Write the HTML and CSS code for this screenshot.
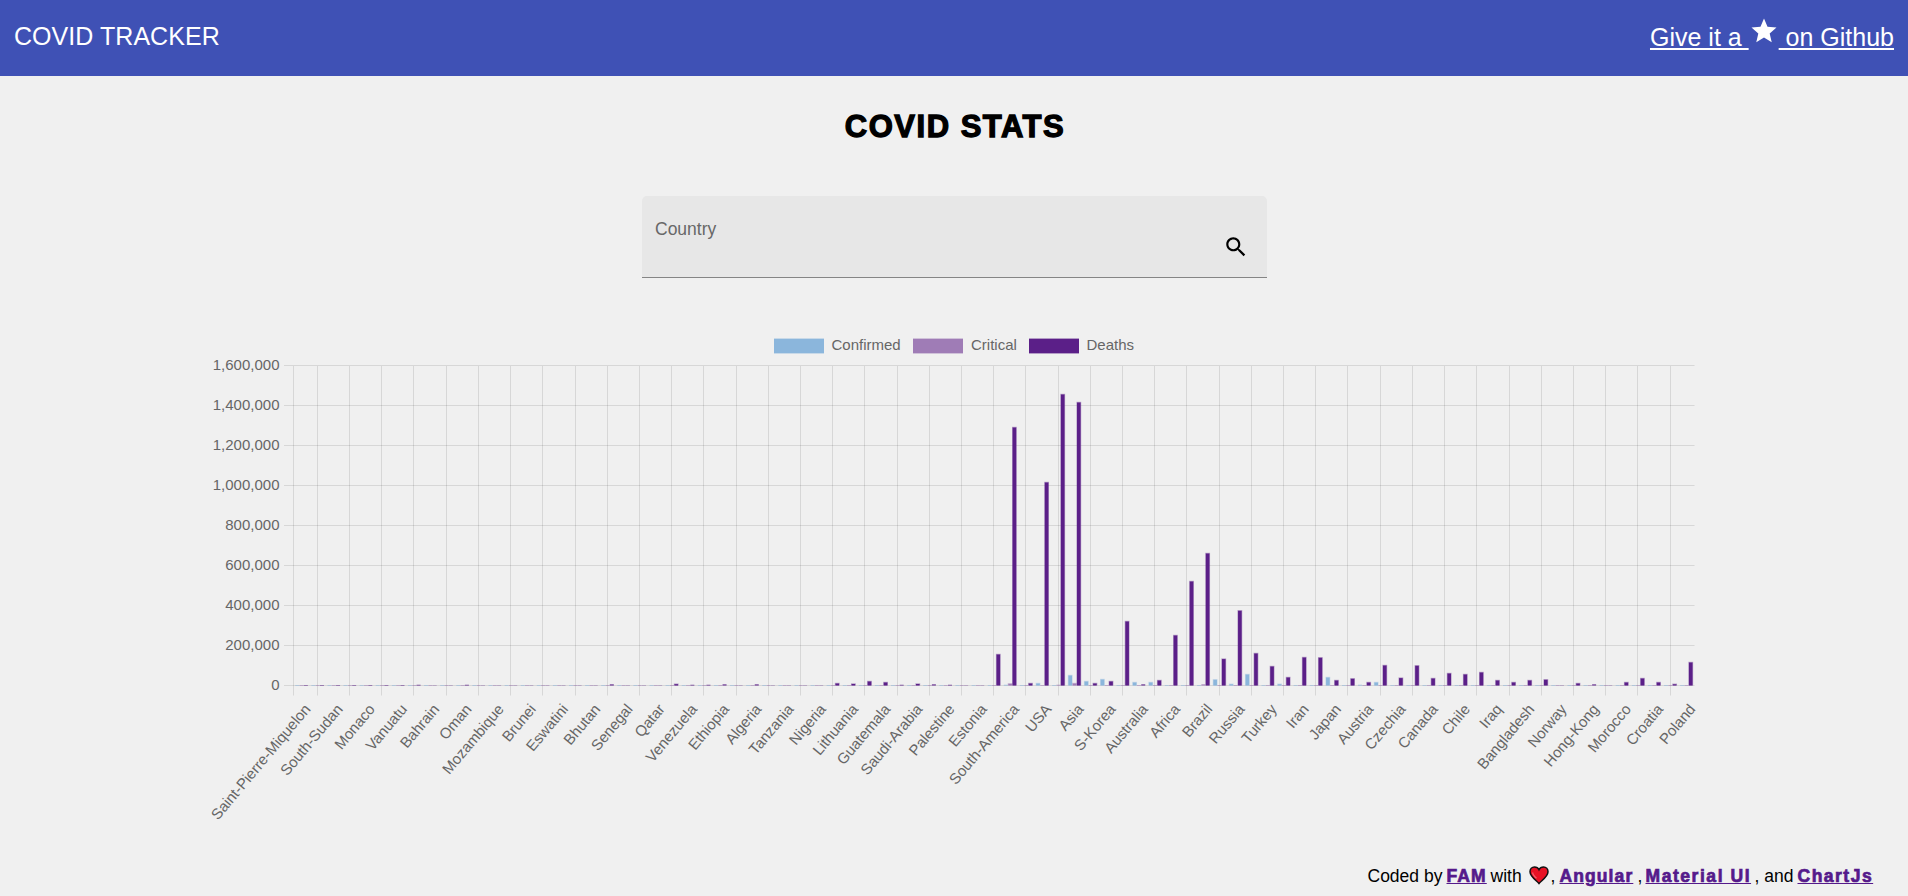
FILE: index.html
```html
<!DOCTYPE html>
<html lang="en">
<head>
<meta charset="utf-8">
<title>Covid Tracker</title>
<link rel="stylesheet" href="styles.css">
</head>
<body>
<header class="toolbar">
  <span class="brand">COVID TRACKER</span>
  <a class="github" href="#"><span class="u">Give it a&nbsp;</span><svg class="star" viewBox="0 0 24 24"><path d="M12 17.27 18.18 21l-1.64-7.03L22 9.24l-7.19-.61L12 2 9.19 8.63 2 9.24l5.46 4.73L5.82 21z"/></svg><span class="u">&nbsp;on Github</span></a>
</header>
<main class="main">
  <h1 class="title">COVID STATS</h1>
  <div class="field">
    <span class="label">Country</span>
    <svg class="search" viewBox="0 0 24 24"><path d="M15.5 14h-.79l-.28-.27C15.41 12.59 16 11.11 16 9.5 16 5.91 13.09 3 9.5 3S3 5.91 3 9.5 5.91 16 9.5 16c1.61 0 3.09-.59 4.23-1.57l.27.28v.79l5 4.99L20.49 19l-4.99-5zm-6 0C7.01 14 5 11.99 5 9.5S7.01 5 9.5 5 14 7.01 14 9.5 11.99 14 9.5 14z"/></svg>
  </div>
  <svg class="chart" id="chart" viewBox="200 328 1508 500"></svg>
</main>
<footer class="footer">
  <span class="by">Coded by</span>
  <a class="link fam" href="#">FAM</a>
  <span class="with">with</span>
  <svg class="heart" viewBox="0 0 20 19"><path d="M10 17.5C7.5 14.5 1 10.5 1 5.7 1 3 3 1 5.4 1 7.500 1 9.200 2.100 10 3.800 10.800 2.100 12.500 1 14.600 1 17 1 19 3 19 5.700 19 10.500 12.500 14.500 10 17.500z" fill="#e81224" stroke="#111" stroke-width="1.500"/><path d="M3.600 6.500C3.600 8.500 5.500 10.500 7.500 12.300" fill="none" stroke="#f4606c" stroke-width="1.300"/></svg>
  <span class="c1">,</span>
  <a class="link ang" href="#">Angular</a>
  <span class="c2">,</span>
  <a class="link mat" href="#">Material UI</a>
  <span class="and">, and</span>
  <a class="link cjs" href="#">ChartJs</a>
</footer>
<script src="chart.js"></script>
</body>
</html>
```
FILE: styles.css
```css
* { box-sizing: border-box; }
body {
  margin: 0;
  height: 896px;
  display: flex;
  flex-direction: column;
  overflow: hidden;
  background: #f0f0f0;
  color: #000;
  font-family: "Liberation Sans", Arial, sans-serif;
}
.toolbar {
  height: 76px;
  flex: none;
  display: flex;
  justify-content: space-between;
  padding: 0 14px;
  background: #3f51b5;
  color: #fff;
  font-size: 25px;
}
.brand { line-height: 72px; letter-spacing: 0.05px; }
.github {
  display: flex;
  color: #fff;
  line-height: 74px;
  text-decoration: none;
}
.u { text-decoration: underline; text-decoration-thickness: 2px; text-underline-offset: 2px; }
.star { width: 30px; height: 30px; margin-top: 16px; fill: #fff; }
.main { display: flex; flex-direction: column; align-items: center; }
.title {
  margin: 32px 0 0;
  height: 88px;
  line-height: 38px;
  padding-left: 2px;
  font-size: 31px;
  font-weight: 700;
  letter-spacing: 1.5px;
  -webkit-text-stroke: 1.3px #000;
}
.field {
  width: 625px;
  height: 82px;
  display: flex;
  justify-content: space-between;
  padding: 0 17.5px 0 13.5px;
  background: #e7e7e7;
  border-bottom: 1px solid #858585;
  border-radius: 5px 5px 0 0;
}
.label { font-size: 17.5px; line-height: 20px; margin-top: 23px; color: #686868; }
.search { width: 26px; height: 26px; margin-top: 38px; }
.chart { width: 1508px; height: 500px; margin-top: 50px; display: block; }
.chart text { font-size: 15px; fill: #666; }
.grid { stroke: rgba(0, 0, 0, 0.1); stroke-width: 1; }
.confirmed { fill: #8bb6dc; }
.critical { fill: #9f7cb6; }
.deaths { fill: #5b1f88; }
.faint { fill-opacity: 0.4; }
.footer {
  flex: none;
  display: flex;
  height: 24px;
  margin-top: 36px;
  padding-left: 1367.5px;
  line-height: 24px;
  font-size: 17.5px;
  white-space: nowrap;
}
.by { width: 79px; }
.with { width: 38px; }
.heart { width: 20px; height: 19px; margin-top: 2px; }
.c1 { width: 11px; padding-left: 2px; }
.c2 { width: 8px; }
.and { width: 43px; }
.link {
  color: #551a8b;
  font-weight: 700;
  -webkit-text-stroke: 0.7px #551a8b;
  text-decoration: underline;
}
.fam { width: 44px; letter-spacing: 1.1px; }
.ang { width: 78px; letter-spacing: 1.100px; }
.mat { width: 109px; letter-spacing: 1.55px; }
.cjs { letter-spacing: 1.5px; }
```
FILE: chart.js
```js
const svg = document.getElementById('chart');
const NS = 'http://www.w3.org/2000/svg';
const add = (tag, attrs, text) => {
  const el = document.createElementNS(NS, tag);
  for (const k in attrs) el.setAttribute(k, attrs[k]);
  if (text) el.textContent = text;
  svg.appendChild(el);
};
const left = 293.5, right = 1694.5, top0 = 365.5, base = 685.5, step = (right - left) / 87;
const line = (x1, y1, x2, y2) => add('line', { x1, y1, x2, y2, class: 'grid' });

// Legend
[['Confirmed', 774, 'confirmed', 831.5], ['Critical', 913, 'critical', 971], ['Deaths', 1029, 'deaths', 1086.5]].forEach(([name, x, cls, tx]) => {
  add('rect', { x, y: 338, width: 50, height: 16, class: cls + ' faint' });
  add('rect', { x, y: 339, width: 50, height: 14, class: cls });
  add('text', { x: tx, y: 350 }, name);
});

// Horizontal grid and value labels
for (let k = 0; k <= 8; k++) {
  const y = top0 + 40 * k;
  line(284, y, right, y);
  add('text', { x: 279.5, y: y + 4.8, 'text-anchor': 'end' }, ((8 - k) * 200000).toLocaleString('en-US'));
}

// Vertical grid
line(left, 366, left, 695.5);
for (let k = 0; k < 43; k++) {
  const x = Math.floor(left + step * (1.5 + 2 * k) - 0.3) + 0.5;
  line(x, 366, x, 695.5);
}

// Country labels
'Saint-Pierre-Miquelon,South-Sudan,Monaco,Vanuatu,Bahrain,Oman,Mozambique,Brunei,Eswatini,Bhutan,Senegal,Qatar,Venezuela,Ethiopia,Algeria,Tanzania,Nigeria,Lithuania,Guatemala,Saudi-Arabia,Palestine,Estonia,South-America,USA,Asia,S-Korea,Australia,Africa,Brazil,Russia,Turkey,Iran,Japan,Austria,Czechia,Canada,Chile,Iraq,Bangladesh,Norway,Hong-Kong,Morocco,Croatia,Poland'.split(',').forEach((name, k) => {
  const x = left + 17.8 + step * 2 * k;
  add('text', { transform: `translate(${x} 709.5) rotate(-50)`, 'text-anchor': 'end' }, name);
});

// Bar heights by country index
const confirmed = { 44: 1, 46: 2.3, 48: 10.3, 49: 4.3, 50: 6.3, 52: 3.3, 53: 3.3, 57: 6, 58: 1.5, 59: 11.3, 61: 1.5, 64: 8.3, 66: 1, 67: 3.3 };
const critical = { 44: 2, 47: 1, 48: 2.3, 56: 1.3 };
const deaths = {
  7: 0.8, 10: 0.8, 19: 1.2, 23: 1.6, 24: 0.9, 25: 0.9, 26: 1.3, 28: 1.1, 33: 2.3, 34: 1.8, 35: 4.3, 36: 3.3, 37: 0.9, 38: 1.8, 39: 1.4, 40: 0.9,
  43: 31.3, 44: 258.3, 45: 2.3, 46: 203.3, 47: 291.3, 48: 283.3, 49: 2.3, 50: 4.3, 51: 64.3, 52: 1.3, 53: 5.3, 54: 50.3, 55: 104.3, 56: 132.3,
  57: 26.7, 58: 75, 59: 32.3, 60: 19.3, 61: 8.3, 62: 28.3, 63: 28, 64: 5.3, 65: 7, 66: 3.3, 67: 20.3, 68: 7.7, 69: 20, 70: 7.3,
  71: 12.3, 72: 11.3, 73: 13.3, 74: 5.3, 75: 3.3, 76: 5.3, 77: 6, 79: 2.3, 80: 1.4, 82: 3.3, 83: 7.3, 84: 3.3, 85: 1.5, 86: 23.3
};
[[confirmed, 'confirmed', -4.3], [critical, 'critical', 0], [deaths, 'deaths', 4.3]].forEach(([data, cls, off]) => {
  for (let i = 0; i < 87; i++) {
    const c = left + step * (i + 0.5) + off;
    const h = data[i] || 0;
    if (h < 1.5) {
      add('rect', { x: c - 2, y: 685, width: 4, height: 1, class: cls, 'fill-opacity': cls === 'deaths' && i > 7 && !h ? 0.25 : 0.5 });
      if (h) add('rect', { x: c - 2, y: 684, width: 4, height: 1, class: cls, 'fill-opacity': h > 1 ? 0.6 : 0.2 });
    } else {
      add('rect', { x: c - 2.4, y: base - h - 0.4, width: 4.8, height: h + 0.4, class: cls + ' faint' });
      add('rect', { x: c - 1.8, y: base - h + 0.3, width: 3.6, height: h - 0.3, class: cls });
    }
  }
});
```
